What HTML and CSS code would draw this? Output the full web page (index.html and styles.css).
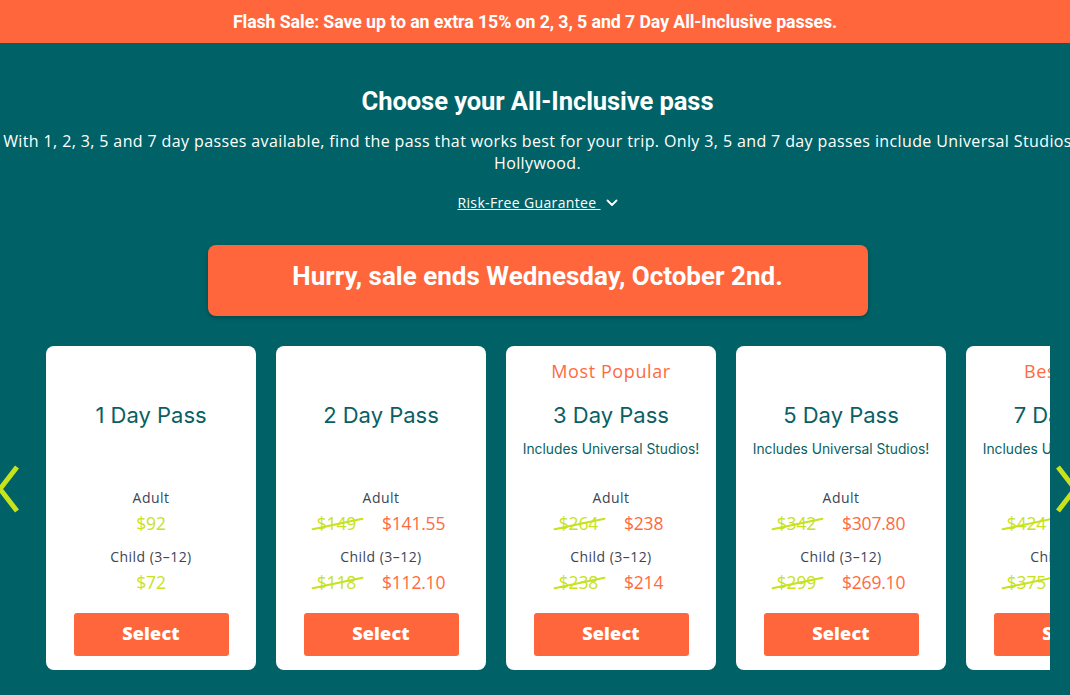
FILE: index.html
```html
<!DOCTYPE html>
<html lang="en">
<head>
<meta charset="utf-8">
<title>Choose your All-Inclusive pass</title>
<link rel="stylesheet" href="styles.css">
</head>
<body>
<div class="flash">Flash Sale: Save up to an extra 15% on 2, 3, 5 and 7 Day All-Inclusive passes.</div>
<main class="section">
  <h1 class="title">Choose your All-Inclusive pass</h1>
  <p class="intro"><span class="intro-line">With 1, 2, 3, 5 and 7 day passes available, find the pass that works best for your trip. Only 3, 5 and 7 day passes include Universal Studios</span>Hollywood.</p>
  <div class="guarantee">
    <a class="guarantee-link" href="#">Risk-Free Guarantee </a>
    <svg class="chev" width="12" height="8" viewBox="0 0 12 8"><polyline points="1.5,1.5 6,6 10.5,1.5" fill="none" stroke="#fff" stroke-width="1.8" stroke-linecap="round" stroke-linejoin="round"/></svg>
  </div>
  <div class="hurry">Hurry, sale ends Wednesday, October 2nd.</div>

  <div class="carousel">
    <svg class="arrow arrow-left" width="26" height="52" viewBox="0 0 26 52"><polyline points="20,3 3,25 20,47" fill="none" stroke="#c8e21c" stroke-width="5"/></svg>
    <div class="viewport">
      <div class="track">
        <div class="card">
          <div class="badge"></div>
          <div class="name">1 Day Pass</div>
          <div class="sub"></div>
          <div class="who">Adult</div>
          <div class="prices"><span class="now only">$92</span></div>
          <div class="who">Child (3–12)</div>
          <div class="prices"><span class="now only">$72</span></div>
          <a class="select" href="#">Select</a>
        </div>
        <div class="card">
          <div class="badge"></div>
          <div class="name">2 Day Pass</div>
          <div class="sub"></div>
          <div class="who">Adult</div>
          <div class="prices"><span class="was">$149</span><span class="now">$141.55</span></div>
          <div class="who">Child (3–12)</div>
          <div class="prices"><span class="was">$118</span><span class="now">$112.10</span></div>
          <a class="select" href="#">Select</a>
        </div>
        <div class="card">
          <div class="badge">Most Popular</div>
          <div class="name">3 Day Pass</div>
          <div class="sub">Includes Universal Studios!</div>
          <div class="who">Adult</div>
          <div class="prices"><span class="was">$264</span><span class="now">$238</span></div>
          <div class="who">Child (3–12)</div>
          <div class="prices"><span class="was">$238</span><span class="now">$214</span></div>
          <a class="select" href="#">Select</a>
        </div>
        <div class="card">
          <div class="badge"></div>
          <div class="name">5 Day Pass</div>
          <div class="sub">Includes Universal Studios!</div>
          <div class="who">Adult</div>
          <div class="prices"><span class="was">$342</span><span class="now">$307.80</span></div>
          <div class="who">Child (3–12)</div>
          <div class="prices"><span class="was">$299</span><span class="now">$269.10</span></div>
          <a class="select" href="#">Select</a>
        </div>
        <div class="card">
          <div class="badge">Best Value</div>
          <div class="name">7 Day Pass</div>
          <div class="sub">Includes Universal Studios!</div>
          <div class="who">Adult</div>
          <div class="prices"><span class="was">$424</span><span class="now">$381.60</span></div>
          <div class="who">Child (3–12)</div>
          <div class="prices"><span class="was">$375</span><span class="now">$337.50</span></div>
          <a class="select" href="#">Select</a>
        </div>
      </div>
    </div>
    <svg class="arrow arrow-right" width="26" height="52" viewBox="0 0 26 52"><polyline points="6,3 23,25 6,47" fill="none" stroke="#c8e21c" stroke-width="5"/></svg>
  </div>
</main>
</body>
</html>
```
FILE: styles.css
```css
html, body {
  margin: 0;
  padding: 0;
}
body {
  background: #006266;
  overflow: hidden;
  font-family: "Open Sans", "Noto Sans", sans-serif;
  color: #fff;
  width: 1070px;
  height: 695px;
}
.flash {
  background: #ff663c;
  height: 43px;
  display: flex;
  align-items: center;
  justify-content: center;
  font-family: Roboto, "Liberation Sans", sans-serif;
  font-weight: 700;
  font-size: 17.8px;
  letter-spacing: -0.1px;
  color: #fff;
}
.section {
  width: 1075px;
  display: flex;
  flex-direction: column;
  align-items: center;
}
.title {
  margin: 44px 0 0;
  font-family: Roboto, "Liberation Sans", sans-serif;
  font-weight: 700;
  font-size: 25.6px;
  line-height: 28px;
  letter-spacing: -0.1px;
}
.intro {
  margin: 15px 0 0;
  width: 100%;
  text-align: center;
  font-size: 16px;
  letter-spacing: 0.38px;
  line-height: 22px;
  white-space: nowrap;
}
.intro-line {
  display: block;
}
.guarantee {
  margin-top: 18px;
  height: 20px;
  display: flex;
  align-items: center;
  gap: 5px;
  font-size: 14px;
  letter-spacing: 0.35px;
}
.guarantee-link {
  color: #fff;
  text-decoration: underline;
  white-space: pre;
}
.chev {
  margin-top: 2px;
}
.hurry {
  margin-top: 33px;
  width: 660px;
  height: 71px;
  background: #ff663c;
  border-radius: 8px;
  box-shadow: 0 2px 4px rgba(0, 0, 0, 0.25);
  display: flex;
  align-items: center;
  justify-content: center;
  padding-bottom: 10px;
  box-sizing: border-box;
  font-family: Roboto, "Liberation Sans", sans-serif;
  font-weight: 700;
  font-size: 26px;
  letter-spacing: 0;
}
.carousel {
  align-self: stretch;
  margin-top: 30px;
  position: relative;
  height: 324px;
}
.viewport {
  margin-left: 46px;
  width: 1004px;
  overflow: hidden;
}
.track {
  display: flex;
  gap: 20px;
  width: max-content;
}
.card {
  width: 210px;
  height: 324px;
  box-sizing: border-box;
  background: #fff;
  border-radius: 8px;
  padding: 12px 0 14px;
  display: flex;
  flex-direction: column;
  align-items: center;
  text-align: center;
}
.badge {
  height: 26px;
  line-height: 26px;
  font-size: 18px;
  letter-spacing: 0.6px;
  color: #ff6a3f;
  white-space: nowrap;
}
.name {
  margin-top: 16px;
  height: 30px;
  line-height: 30px;
  font-family: Inter, "Noto Sans", sans-serif;
  font-size: 22px;
  color: #0b5f63;
  white-space: nowrap;
}
.sub {
  margin-top: 9px;
  height: 20px;
  line-height: 20px;
  font-family: Inter, "Noto Sans", sans-serif;
  font-size: 13.8px;
  color: #0b5f63;
  white-space: nowrap;
}
.who {
  height: 20px;
  line-height: 20px;
  font-size: 14px;
  letter-spacing: 0.45px;
  color: #3c4556;
  margin-top: 12px;
  white-space: nowrap;
}
.sub + .who {
  margin-top: 29px;
}
.prices {
  margin-top: 3px;
  height: 24px;
  line-height: 24px;
  font-size: 17.5px;
  letter-spacing: -0.2px;
  display: flex;
  gap: 26px;
  justify-content: center;
  white-space: nowrap;
}
.was {
  color: #c8e21c;
  position: relative;
}
.was::after {
  content: "";
  position: absolute;
  left: -6px;
  right: -8px;
  top: 12px;
  height: 2px;
  background: #c8e21c;
  transform: rotate(-12deg);
  border-radius: 1px;
}
.now {
  color: #ff6a3f;
}
.now.only {
  color: #c8e21c;
}
.select {
  margin-top: auto;
  width: 155px;
  height: 43px;
  border-radius: 3px;
  background: #ff663c;
  color: #fff;
  text-decoration: none;
  font-weight: 800;
  font-size: 18px;
  letter-spacing: 0.2px;
  display: flex;
  align-items: center;
  justify-content: center;
  padding-bottom: 3px;
  box-sizing: border-box;
}
.arrow {
  position: absolute;
  top: 118px;
}
.arrow-left {
  left: -3px;
}
.arrow-right {
  left: 1052px;
}
```
